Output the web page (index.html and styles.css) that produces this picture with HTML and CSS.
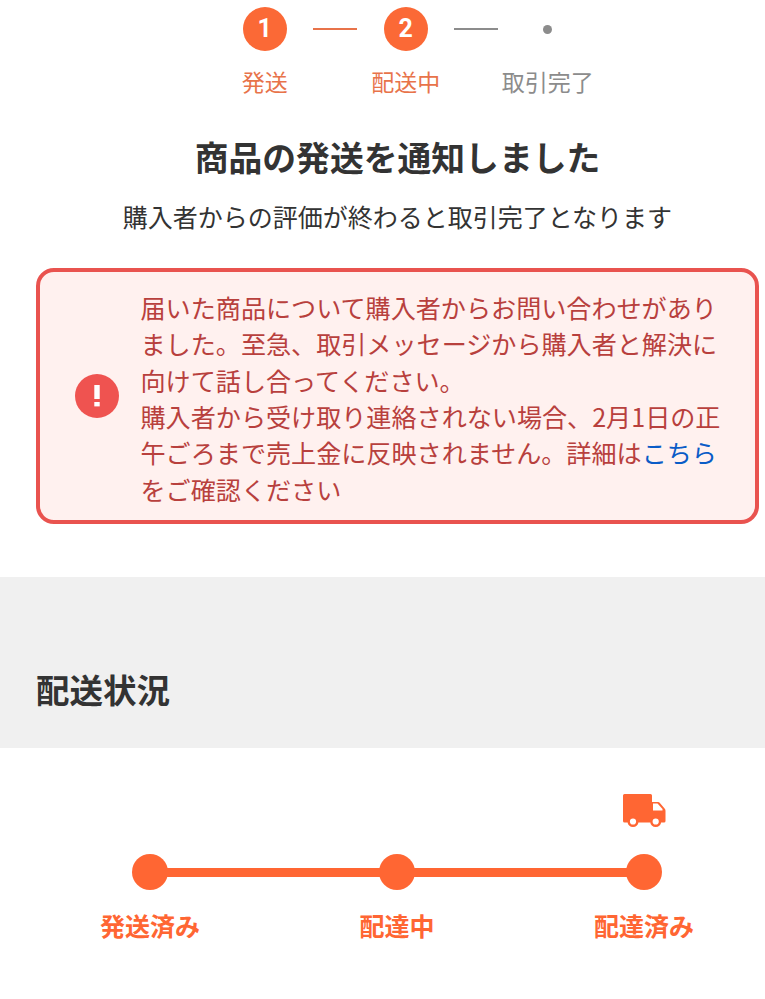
FILE: index.html
```html
<!DOCTYPE html>
<html lang="ja">
<head>
<meta charset="utf-8">
<title>配送状況</title>
<link rel="stylesheet" href="styles.css">
</head>
<body>
<section class="stepper">
  <div class="step step-on">
    <div class="step-head"><span class="num">1</span></div>
    <div class="step-label">発送</div>
  </div>
  <div class="conn conn-on"></div>
  <div class="step step-on">
    <div class="step-head"><span class="num">2</span></div>
    <div class="step-label">配送中</div>
  </div>
  <div class="conn"></div>
  <div class="step step-off">
    <div class="step-head"><span class="dot"></span></div>
    <div class="step-label">取引完了</div>
  </div>
</section>
<h1 class="title">商品の発送を通知しました</h1>
<p class="sub">購入者からの評価が終わると取引完了となります</p>
<section class="alert">
  <svg class="alert-icon" viewBox="0 0 44 44" width="44" height="44" aria-hidden="true">
    <circle cx="22" cy="22" r="22" fill="#ef5350"/>
    <rect x="19.3" y="11" width="5.400" height="14" fill="#fff"/>
    <rect x="19.3" y="28" width="5.400" height="4.400" fill="#fff"/>
  </svg>
  <p class="alert-text">届いた商品について購入者からお問い合わせがありました。至急、取引メッセージから購入者と解決に向けて話し合ってください。<br>購入者から受け取り連絡されない場合、2月1日の正午ごろまで売上金に反映されません。詳細は<span class="link">こちら</span>をご確認ください</p>
</section>
<section class="band"><h2 class="band-title">配送状況</h2></section>
<section class="track">
  <div class="truck-row">
    <svg class="truck" viewBox="0 0 43 33" width="43" height="33" aria-hidden="true">
      <path fill="#ff6633" d="M1.500 0h26a1.500 1.500 0 0 1 1.500 1.500V8h6c.8 0 1.400.3 1.900.9l4.700 5.600c.6.700.9 1.400.9 2.300v10.200a1.500 1.500 0 0 1-1.500 1.500H1.500A1.500 1.500 0 0 1 0 27V1.500A1.500 1.500 0 0 1 1.500 0z"/>
      <path fill="#fff" d="M30 9.500h4.500l5 5.500v1.500H30z"/>
      <circle cx="10" cy="27.500" r="4.300" fill="#fff" stroke="#ff6633" stroke-width="2.400"/>
      <circle cx="32.700" cy="27.500" r="4.300" fill="#fff" stroke="#ff6633" stroke-width="2.400"/>
    </svg>
  </div>
  <div class="rail">
    <span class="node"></span><span class="bar"></span><span class="node"></span><span class="bar"></span><span class="node"></span>
  </div>
  <div class="track-labels">
    <span class="track-label">発送済み</span>
    <span class="track-label">配達中</span>
    <span class="track-label">配達済み</span>
  </div>
</section>
</body>
</html>
```
FILE: styles.css
```css
* { box-sizing: border-box; }
html, body { margin: 0; padding: 0; }
body {
  width: 765px;
  height: 999px;
  overflow: hidden;
  background: #fff;
  font-family: "Noto Sans CJK JP", "Noto Sans", sans-serif;
  color: #333;
}
.stepper {
  display: flex;
  padding: 7px 0 0 216.200px;
  height: 132px;
}
.step {
  width: 97px;
  display: flex;
  flex-direction: column;
  align-items: center;
}
.step-off { width: 99px; }
.step-head {
  width: 44px;
  height: 44px;
  flex: none;
  display: flex;
  align-items: center;
  justify-content: center;
}
.num {
  width: 44px;
  height: 44px;
  border-radius: 50%;
  background: #fb6936;
  color: #fff;
  font-family: Roboto, sans-serif;
  font-weight: 700;
  font-size: 25px;
  line-height: 44px;
  text-align: center;
}
.dot {
  width: 9px;
  height: 9px;
  border-radius: 50%;
  background: #8c8c8c;
}
.step-label {
  margin-top: 13px;
  font-size: 23px;
  line-height: 34px;
  white-space: nowrap;
  color: #e8734a;
}
.step-off .step-label { color: #8c8c8c; }
.conn {
  width: 44px;
  height: 2px;
  margin-top: 21px;
  background: #8c8c8c;
}
.conn-on { background: #e8734a; }
.title {
  margin: 0;
  padding-left: 30px;
  font-size: 33.800px;
  font-weight: 700;
  line-height: 50px;
  text-align: center;
  color: #333;
}
.sub {
  margin: 15px 0 0;
  padding-left: 30px;
  font-size: 25px;
  line-height: 38px;
  text-align: center;
  color: #333;
}
.alert {
  margin: 33px 6px 0 36px;
  height: 256px;
  border: 4.500px solid #e9534f;
  border-radius: 18px;
  background: #fff1ef;
  display: flex;
  align-items: center;
  padding-left: 34.500px;
  gap: 22px;
}
.alert-icon { flex: none; }
.alert-text {
  margin: 0;
  padding-top: 4px;
  width: 582px;
  flex: none;
  font-size: 25.100px;
  line-height: 36.400px;
  color: #b8403d;
}
.link { color: #0a5cc7; }
.band {
  margin-top: 53px;
  height: 171px;
  background: #f0f0f0;
  display: flex;
  align-items: flex-end;
  padding: 0 0 34px 36px;
}
.band-title {
  margin: 0;
  font-size: 33.500px;
  line-height: 50px;
  font-weight: 700;
  color: #333;
}
.track { padding-top: 46px; }
.truck-row {
  display: flex;
  justify-content: flex-end;
  padding-right: 99px;
  height: 33px;
}
.rail {
  margin: 27px 0 0 132px;
  width: 530px;
  display: flex;
  align-items: center;
}
.node {
  flex: none;
  width: 36px;
  height: 36px;
  border-radius: 50%;
  background: #ff6633;
}
.bar {
  flex: 1;
  height: 9px;
  margin: 0 -1px;
  background: #ff6633;
}
.track-labels {
  margin: 16px 0 0 50px;
  width: 694px;
  display: flex;
  justify-content: space-between;
}
.track-label {
  width: 200px;
  text-align: center;
  font-size: 25px;
  line-height: 38px;
  font-weight: 700;
  color: #ff6633;
}
```
